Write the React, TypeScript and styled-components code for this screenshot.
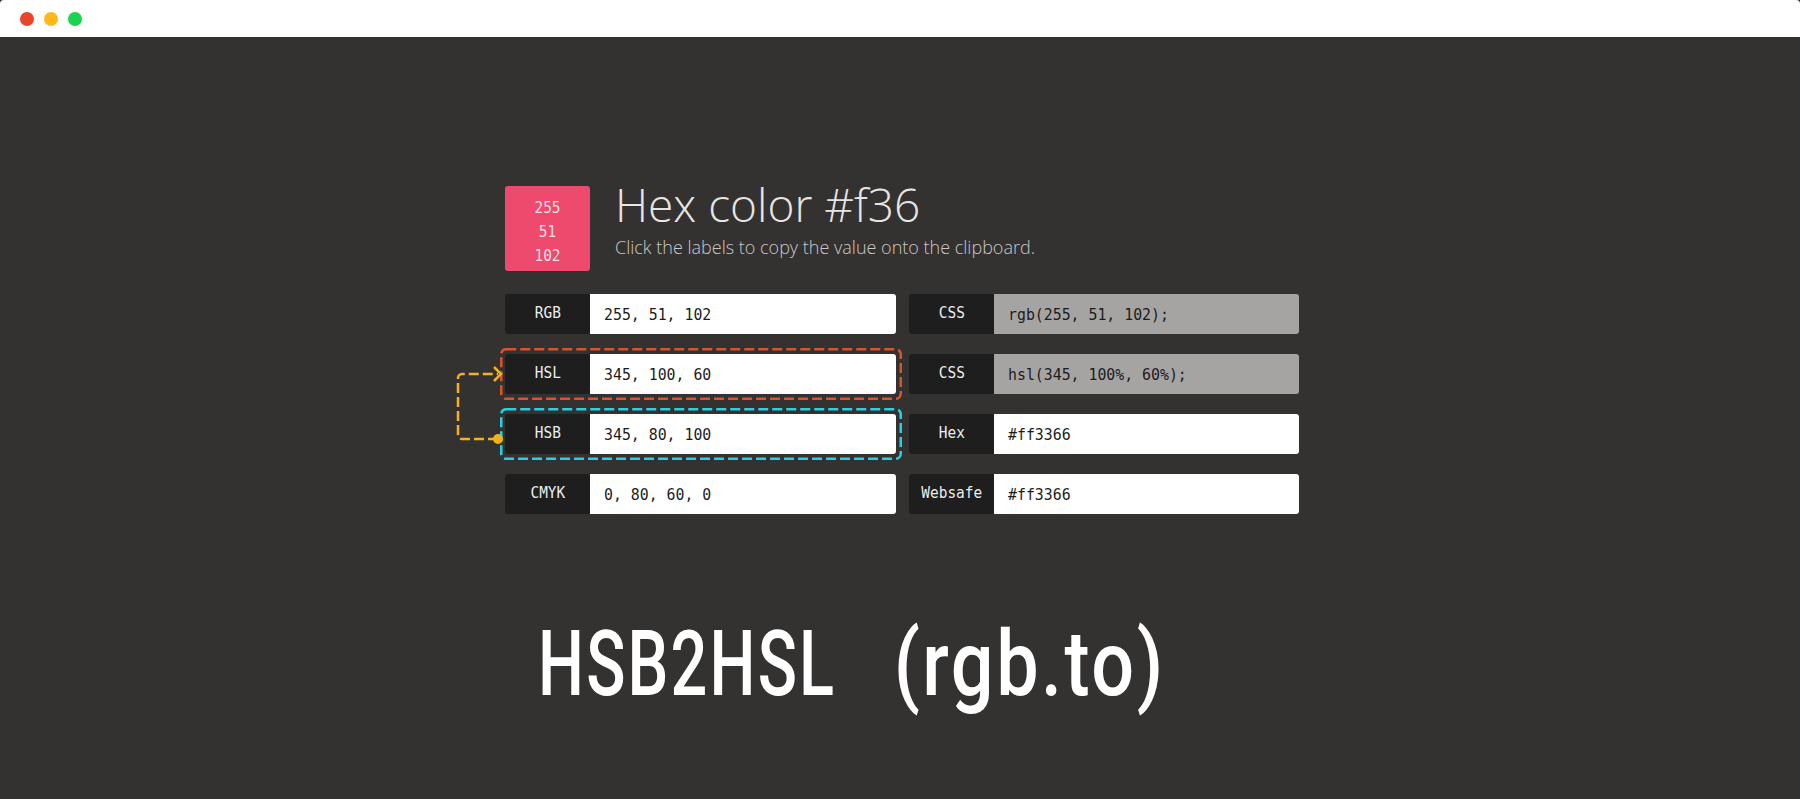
import React from "react";
import styled, { createGlobalStyle } from "styled-components";

const Global = createGlobalStyle`
  html, body { margin: 0; padding: 0; height: 100%; background: #343231; overflow: hidden; }
  #root { height: 100%; }
`;

const Page = styled.div`
  display: flex;
  flex-direction: column;
  height: 799px;
  background: #343231;
  font-family: "DejaVu Sans Mono", monospace;
`;

const TitleBar = styled.div`
  display: flex;
  align-items: center;
  gap: 10px;
  height: 37px;
  padding: 0 0 0 20px;
  flex: none;
  background: #fff;
  border-radius: 4px 4px 0 0;
`;

const Light = styled.span<{ $c: string }>`
  width: 14px;
  height: 14px;
  border-radius: 50%;
  background: ${(p) => p.$c};
`;

const Content = styled.div`
  width: 794px;
  margin: 149px 0 0 505px;
`;

const Header = styled.header`
  display: flex;
  height: 85px;
  margin-bottom: 23px;
`;

const Swatch = styled.div`
  width: 85px;
  height: 85px;
  flex: none;
  border-radius: 3px;
  background: #ee4a6e;
  color: #fbdfe5;
  font-size: 16px;
  line-height: 24px;
  text-align: center;
  padding-top: 10px;
  box-sizing: border-box;
`;

const SwatchLine = styled.div`
  transform: scaleX(0.9);
`;

const Heading = styled.div`
  margin-left: 25px;
  font-family: "Open Sans", sans-serif;
  font-weight: 300;
`;

const Title = styled.h1`
  margin: -14px 0 0;
  font-size: 46px;
  line-height: 65px;
  font-weight: 300;
  color: #e6e5e3;
  white-space: nowrap;
`;

const Sub = styled.p`
  margin: -2px 0 0;
  font-size: 18px;
  line-height: 24px;
  color: #c9c8c6;
  white-space: nowrap;
`;

const Grid = styled.div`
  display: grid;
  grid-template-columns: 391px 390px;
  grid-auto-rows: 40px;
  column-gap: 13px;
  row-gap: 20px;
`;

const Field = styled.div`
  position: relative;
  display: flex;
  height: 40px;
`;

const Label = styled.div`
  width: 85px;
  flex: none;
  display: flex;
  align-items: center;
  justify-content: center;
  padding-bottom: 4px;
  box-sizing: border-box;
  background: #1e1e1e;
  color: #ececec;
  font-size: 16.5px;
  border-radius: 3px 0 0 3px;
  white-space: pre;
`;

const LabelText = styled.span`
  display: inline-block;
  transform: scaleX(0.875);
`;

const Value = styled.div<{ $muted?: boolean }>`
  flex: 1;
  display: flex;
  align-items: center;
  padding-left: 14px;
  box-sizing: border-box;
  background: ${(p) => (p.$muted ? "#a5a4a2" : "#fff")};
  color: #1c1c1c;
  font-size: 16.5px;
  white-space: pre;
  border-radius: 0 3px 3px 0;
`;

const ValueText = styled.span`
  display: inline-block;
  transform: scaleX(0.9);
  transform-origin: 0 50%;
`;

const Dashed = styled.svg`
  position: absolute;
  left: -5px;
  top: -6px;
  width: 402px;
  height: 52px;
  pointer-events: none;
`;

const Connector = styled.svg`
  position: absolute;
  z-index: 1;
  left: -49px;
  top: 15px;
  width: 54px;
  height: 80px;
  overflow: visible;
  pointer-events: none;
`;

const BigText = styled.div`
  display: flex;
  margin: 98px 0 0 538px;
  font-family: "Roboto", sans-serif;
  font-weight: 530;
  font-size: 90px;
  line-height: 106px;
  color: #fff;
  white-space: pre;
  transform: scaleX(0.72);
  transform-origin: 0 0;
`;

const Word = styled.span<{ $spacing: number; $gap?: number; $stretch?: number }>`
  display: inline-block;
  letter-spacing: ${(p) => p.$spacing}px;
  margin-left: ${(p) => p.$gap ?? 0}px;
  transform: scaleX(${(p) => p.$stretch ?? 1});
  transform-origin: 0 0;
`;

const Outline = ({ color }: { color: string }) => (
  <Dashed viewBox="0 0 402 52">
    <rect x="1.25" y="1.25" width="399.5" height="49.5" rx="5" fill="none" stroke={color} strokeWidth="2.5" strokeDasharray="10 4" />
  </Dashed>
);

const rows: { label: string; value: string; muted?: boolean; mark?: string; link?: boolean }[] = [
  { label: "RGB", value: "255, 51, 102" },
  { label: "CSS", value: "rgb(255, 51, 102);", muted: true },
  { label: "HSL", value: "345, 100, 60", mark: "#d9532c", link: true },
  { label: "CSS", value: "hsl(345, 100%, 60%);", muted: true },
  { label: "HSB", value: "345, 80, 100", mark: "#2bd0e0" },
  { label: "Hex", value: "#ff3366" },
  { label: "CMYK", value: "0, 80, 60, 0" },
  { label: "Websafe", value: "#ff3366" },
];

export default function App() {
  return (
    <Page>
      <Global />
      <TitleBar>
        <Light $c="#e8452b" />
        <Light $c="#fdb81c" />
        <Light $c="#19d44f" />
      </TitleBar>
      <Content>
        <Header>
          <Swatch>
            <SwatchLine>255</SwatchLine>
            <SwatchLine>51</SwatchLine>
            <SwatchLine>102</SwatchLine>
          </Swatch>
          <Heading>
            <Title>Hex color #f36</Title>
            <Sub>Click the labels to copy the value onto the clipboard.</Sub>
          </Heading>
        </Header>
        <Grid>
          {rows.map((r, i) => (
            <Field key={i}>
              {r.link && (
                <Connector viewBox="0 0 54 80">
                  <path
                    d="M42 70H6a4 4 0 0 1-4-4V9a4 4 0 0 1 4-4H42"
                    fill="none"
                    stroke="#f5b01f"
                    strokeWidth="2.5"
                    strokeDasharray="10 4"
                  />
                  <path d="M38 -2L45 5L38 12" fill="none" stroke="#f5b01f" strokeWidth="2.5" />
                  <circle cx="42" cy="70" r="5" fill="#f5b01f" />
                </Connector>
              )}
              <Label>
                <LabelText>{r.label}</LabelText>
              </Label>
              <Value $muted={r.muted}>
                <ValueText>{r.value}</ValueText>
              </Value>
              {r.mark && <Outline color={r.mark} />}
            </Field>
          ))}
        </Grid>
      </Content>
      <BigText>
        <Word $spacing={3}>HSB2HSL</Word>
        <Word $spacing={3} $gap={80} $stretch={1.165}>(rgb.to)</Word>
      </BigText>
    </Page>
  );
}
